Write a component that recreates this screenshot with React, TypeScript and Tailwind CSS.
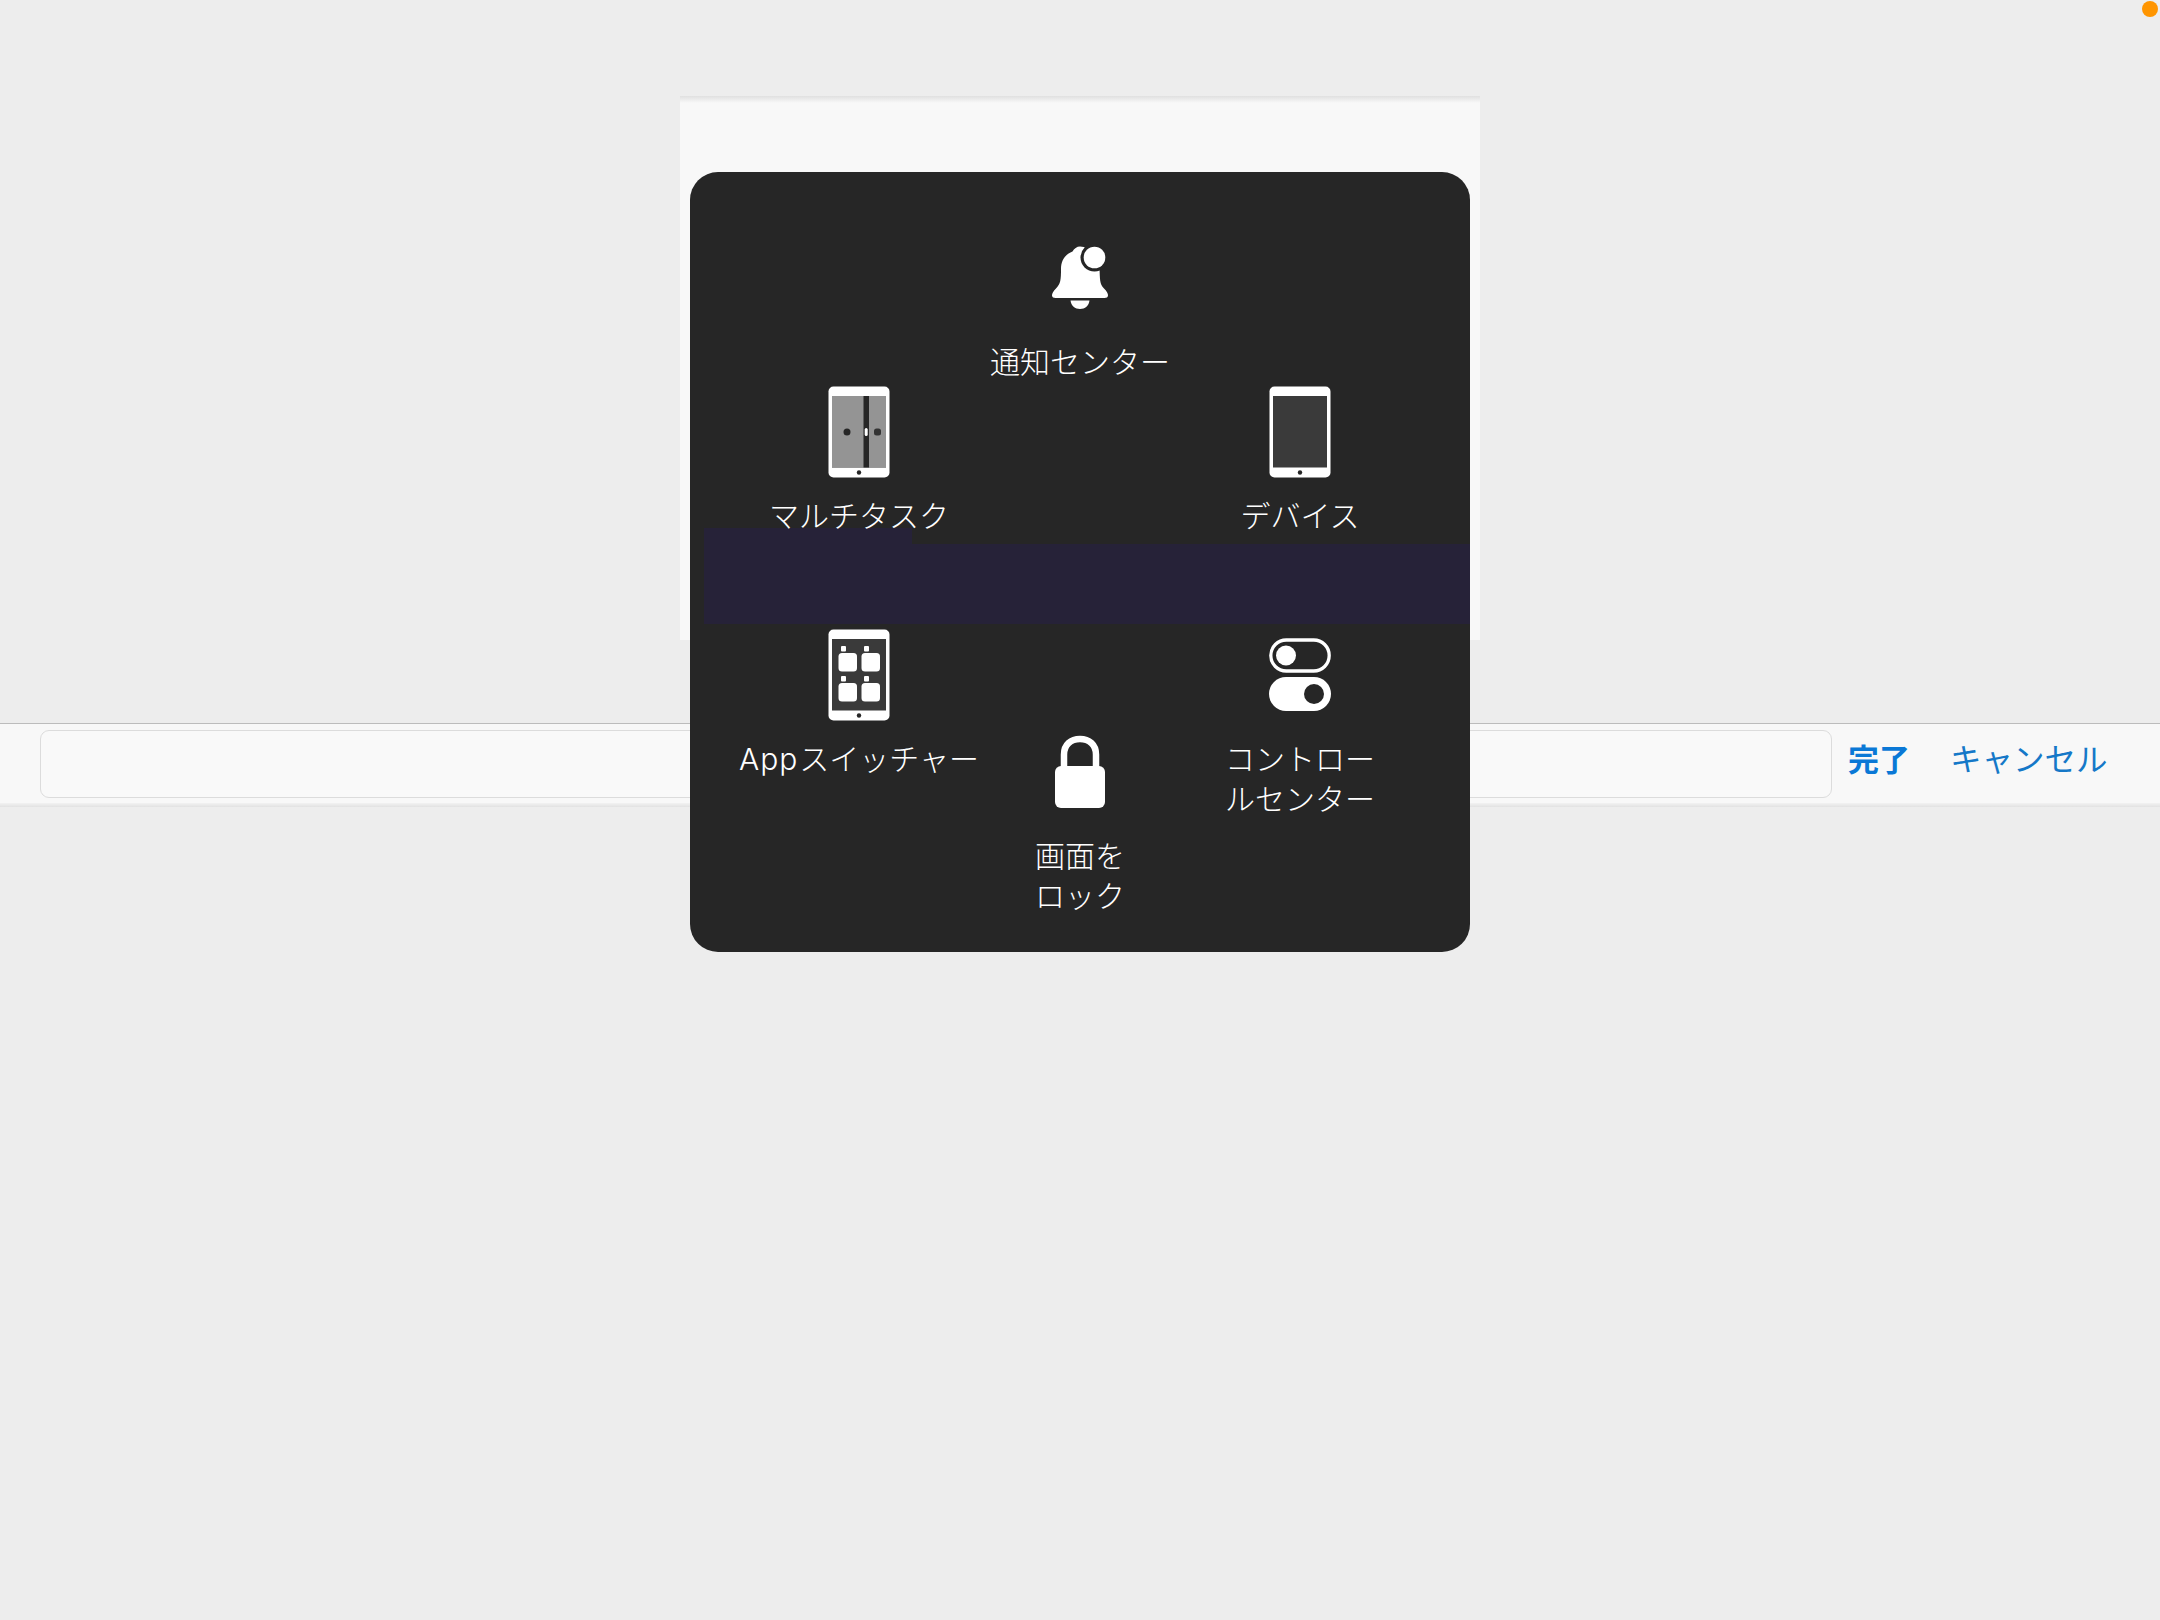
import type { ReactNode } from "react";

const labelFont = "font-['Inter','Noto_Sans_CJK_JP',sans-serif]";

function BellIcon() {
  return (
    <svg className="shrink-0" width="60" height="92" viewBox="0 2 60 92" fill="#fff">
      <path d="M30 16.500C27 16.500 24 18.500 22.500 21.500C14.500 24.500 11 31 11 39C11 50 10.500 54 6 58.500C3 61.500 2 63.500 2 65.500C2 67.200 3.500 68 5.500 68H54.500C56.500 68 58 67.200 58 65.500C58 63.500 57 61.500 54 58.500C49.500 54 50 49 49.500 38Q30 34 37 18Q34 16.500 30 16.500Z" />
      <circle cx="44.500" cy="27.500" r="14" fill="#262626" />
      <circle cx="44.500" cy="27.500" r="10.800" />
      <path d="M20.500 70.500H39.500C39 75.500 35 79 30 79S21 75.500 20.500 70.500Z" />
    </svg>
  );
}

function Tablet({ children }: { children?: ReactNode }) {
  return (
    <svg className="shrink-0" width="62" height="92" viewBox="0 0 62 92">
      <rect x="0.500" y="0.500" width="61" height="91" rx="5" fill="#fff" />
      <rect x="4" y="10" width="54" height="71.500" fill="#3a3a3a" />
      {children}
      <circle cx="31" cy="86.500" r="2.200" fill="#262626" />
    </svg>
  );
}

function MultitaskIcon() {
  return (
    <Tablet>
      <rect x="4" y="10" width="54" height="71.500" fill="#949494" />
      <rect x="35.500" y="10" width="5.500" height="71.500" fill="#262626" />
      <rect x="36.700" y="42" width="3" height="8" rx="1.500" fill="#fff" />
      <circle cx="19" cy="46" r="3.500" fill="#262626" />
      <rect x="46" y="42.500" width="7" height="7" rx="2.500" fill="#333" />
    </Tablet>
  );
}

function SwitcherIcon() {
  return (
    <Tablet>
      {[
        [11, 24],
        [34, 24],
        [11, 54],
        [34, 54],
      ].map(([x, y]) => (
        <g key={`${x}-${y}`} fill="#fff">
          <rect x={x + 2} y={y - 7} width="5" height="5.500" rx="1" />
          <rect x={x - 0.5} y={y} width="18.500" height="18.500" rx="3.500" />
        </g>
      ))}
    </Tablet>
  );
}

function TogglesIcon() {
  return (
    <svg className="shrink-0" width="62" height="92" viewBox="0 0 62 92">
      <rect x="1.800" y="11" width="58.400" height="31" rx="15.500" fill="none" stroke="#fff" strokeWidth="3.300" />
      <circle cx="17" cy="26.500" r="10" fill="#fff" />
      <rect x="0" y="48" width="62" height="34" rx="17" fill="#fff" />
      <circle cx="45" cy="65" r="10" fill="#262626" />
    </svg>
  );
}

function LockIcon() {
  return (
    <svg className="shrink-0" width="50" height="92" viewBox="0 0 50 92">
      <path d="M9 44V28.500C9 18.500 16 13 25 13S41 18.500 41 28.500V44" fill="none" stroke="#fff" strokeWidth="6.500" />
      <rect x="0" y="40" width="50" height="42" rx="6" fill="#fff" />
    </svg>
  );
}

function MenuItem({ icon, lines }: { icon: ReactNode; lines: ReactNode[] }) {
  return (
    <button className="flex h-[150px] w-full flex-col items-center justify-start">
      {icon}
      <span className="mt-[18px] flex flex-col items-center text-[30px] leading-[40px] font-light whitespace-nowrap text-white">
        {lines.map((line, i) => (
          <span key={i}>{line}</span>
        ))}
      </span>
    </button>
  );
}

export default function App() {
  return (
    <main className={`relative flex h-[1620px] w-[2160px] flex-col overflow-hidden bg-[#ededed] ${labelFont}`}>
      <section className="mx-auto mt-[96px] h-[544px] w-[800px] shrink-0 bg-[#f8f8f8]">
        <div className="h-[7px] bg-linear-to-b from-[#e0e0e0] to-[#f8f8f8]" />
      </section>

      <div className="mt-[83px] flex h-[80px] shrink-0 items-start border-t border-[#bcbcbc] bg-[#f8f8f8] pt-[6px] pl-[40px]">
        <div className="h-[68px] w-[1792px] rounded-[9px] border border-[#dcdcdc] bg-[#f9f9f9]" />
        <button className="mt-[6px] ml-[16px] text-[31px] leading-[48px] font-bold whitespace-nowrap text-[#0a78d6]">完了</button>
        <button className="mt-[6px] ml-[40px] text-[31.5px] leading-[48px] whitespace-nowrap text-[#1578c8]">キャンセル</button>
      </div>
      <div className="h-[4px] shrink-0 bg-linear-to-b from-[#f2f2f2] to-[#e2e2e2]" />

      <span className="absolute top-[1px] right-[2px] size-[16px] rounded-full bg-[#ff9500]" />

      <div className="absolute top-[172px] left-[690px] h-[780px] w-[780px] overflow-hidden rounded-[28px] bg-[#262626]">
        <div className="absolute top-[356px] right-0 left-[14px] h-[96px]">
          <div className="h-[16px] w-[208px] bg-[#262238]" />
          <div className="h-[80px] bg-[#262238]" />
        </div>
        <div className="relative grid h-full grid-cols-[218px_224px_216px] pl-[60px]">
          <div className="flex flex-col gap-[93px] pt-[214px]">
            <MenuItem icon={<MultitaskIcon />} lines={["マルチタスク"]} />
            <MenuItem
              icon={<SwitcherIcon />}
              lines={[
                <>
                  <span className="mr-[1px] tracking-[1px]">App</span>スイッチャー
                </>,
              ]}
            />
          </div>
          <div className="flex flex-col gap-[344px] pt-[60px]">
            <MenuItem icon={<BellIcon />} lines={["通知センター"]} />
            <MenuItem icon={<LockIcon />} lines={["画面を", "ロック"]} />
          </div>
          <div className="flex flex-col gap-[93px] pt-[214px]">
            <MenuItem icon={<Tablet />} lines={["デバイス"]} />
            <MenuItem icon={<TogglesIcon />} lines={["コントロー", "ルセンター"]} />
          </div>
        </div>
      </div>
    </main>
  );
}
